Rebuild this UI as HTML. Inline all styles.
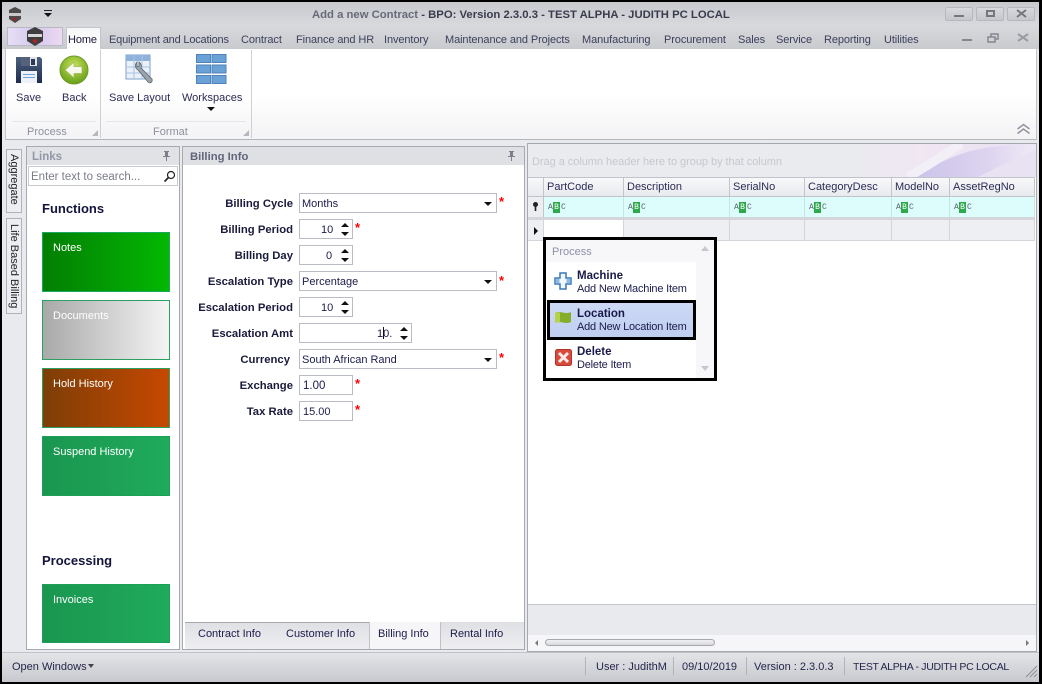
<!DOCTYPE html>
<html><head><meta charset="utf-8">
<style>
html,body{margin:0;padding:0}
body{width:1042px;height:684px;position:relative;overflow:hidden;background:#000;font-family:"Liberation Sans",sans-serif;font-size:11px;color:#1b1b4b}
div,span,svg{position:absolute;box-sizing:border-box}
.t{white-space:nowrap;line-height:14px}
.tab{top:33px;color:#3b3f5c;white-space:nowrap;line-height:14px;letter-spacing:-.1px}
.lab{right:749px;font-weight:bold;font-size:11.3px;color:#1a1a3c;white-space:nowrap;line-height:14px}
.inp{background:#fff;border:1px solid #b9bcc4}
.val{white-space:nowrap;line-height:14px;color:#1b1b4b;font-size:11px}
.star{color:#f00;font-weight:bold;font-size:13px;line-height:14px}
.up{width:0;height:0;border-left:4px solid transparent;border-right:4px solid transparent;border-bottom:4px solid #111}
.dn{width:0;height:0;border-left:4px solid transparent;border-right:4px solid transparent;border-top:4px solid #111}
.tile{left:42px;width:128px;height:60px;color:#fff;padding:8px 10px;line-height:14px;font-size:11px;border:1px solid #2aa163}
.hd{top:177px;height:20px;background:linear-gradient(#f8f8fa,#e9eaee);border-right:1px solid #c2c4cb;border-top:1px solid #c2c4cb;border-bottom:1px solid #c2c4cb;padding:2px 0 0 3px;white-space:nowrap;line-height:14px;color:#2b2b55}
.fl{top:197px;height:20px;border-right:1px solid #c6e6e6}
.abc{left:4px;top:5px;width:22px;height:11px;font-size:8px;line-height:11px;color:#55606a;font-family:"Liberation Mono",monospace}
.abc b{position:absolute;left:5px;top:0;width:7px;height:11px;background:#2da84a;color:#fff;font-weight:normal;text-align:center}
.abc i{position:absolute;font-style:normal;top:0}
.dc{top:220px;height:21px;background:#eeeff2;border-right:1px solid #d3d5da;border-bottom:1px solid #d3d5da}
.sep{top:657px;width:1px;height:18px;background:#b1b3ba}
.pop{letter-spacing:-.2px}
</style></head><body>

<!-- window -->
<div style="left:2px;top:2px;width:1037px;height:680px;background:#e9eaee"></div>
<!-- title bar -->
<div style="left:2px;top:2px;width:1037px;height:47px;background:linear-gradient(#c8c9ce,#d8d9dd 50%,#c9cace)"></div>
<svg style="left:6px;top:6px" width="18" height="18" viewBox="0 0 18 18"><path d="M9 1l6 3v9l-6 4-6-4V4z" fill="#4c4a4a"/><rect x="3" y="7" width="12" height="3" fill="#c9c9c9"/><circle cx="9" cy="13" r="1.500" fill="#a22"/></svg>
<div class="dn" style="left:44px;top:13px"></div><div style="left:44px;top:10px;width:8px;height:1px;background:#222"></div>
<div class="t" style="left:312px;top:8px;font-weight:bold;font-size:11.3px;color:#676a78">Add a new Contract <span style="position:static;color:#3a3c4c">- BPO: Version 2.3.0.3 - TEST ALPHA - JUDITH PC LOCAL</span></div>

<!-- window buttons -->
<div style="left:945px;top:7px;width:28px;height:14px;border:1px solid #b6b8be;border-radius:2px;background:linear-gradient(#d8d9dd,#c6c7cc)"></div><div style="left:954px;top:15px;width:10px;height:2px;background:#75767e"></div>
<div style="left:976px;top:7px;width:28px;height:14px;border:1px solid #b6b8be;border-radius:2px;background:linear-gradient(#d8d9dd,#c6c7cc)"></div><div style="left:986px;top:10px;width:9px;height:7px;border:2px solid #75767e"></div>
<div style="left:1007px;top:7px;width:28px;height:14px;border:1px solid #b6b8be;border-radius:2px;background:linear-gradient(#d8d9dd,#c6c7cc)"></div>
<svg style="left:1016px;top:9px" width="11" height="9" viewBox="0 0 11 9"><path d="M1 1l9 7M10 1l-9 7" stroke="#75767e" stroke-width="2"/></svg>
<svg style="left:962px;top:33px" width="70" height="11" viewBox="0 0 70 11"><rect x="0" y="6" width="10" height="2" fill="#85878f"/><rect x="29" y="1" width="7" height="5" fill="none" stroke="#85878f" stroke-width="1.500"/><rect x="26" y="4" width="7" height="5" fill="#d0d1d6" stroke="#85878f" stroke-width="1.500"/><path d="M56 1l10 7M66 1l-10 7" stroke="#9a9ca4" stroke-width="2"/></svg>

<!-- app button -->
<div style="left:7px;top:27px;width:56px;height:19px;background:linear-gradient(90deg,#e6dff5,#d6c9ee 50%,#ecd9f2);border:1px solid #b9b9c6"></div>
<svg style="left:25px;top:26px" width="20" height="21" viewBox="0 0 20 21"><path d="M10 1l8 4v10l-8 5-8-5V5z" fill="#3f3d3e"/><rect x="3" y="8" width="14" height="3" fill="#d6d6d6"/><circle cx="10" cy="15" r="2" fill="#a22"/></svg>

<!-- tabs -->
<div style="left:66px;top:27px;width:35px;height:23px;background:linear-gradient(#f6f6f8,#fff);border:1px solid #c3c5ca;border-bottom:none"></div>
<div class="tab" style="left:68px;color:#1b1b3c">Home</div>
<div class="tab" style="left:109px;letter-spacing:-.19px">Equipment and Locations</div>
<div class="tab" style="left:241px">Contract</div>
<div class="tab" style="left:296px">Finance and HR</div>
<div class="tab" style="left:384px">Inventory</div>
<div class="tab" style="left:445px">Maintenance and Projects</div>
<div class="tab" style="left:582px">Manufacturing</div>
<div class="tab" style="left:664px">Procurement</div>
<div class="tab" style="left:738px">Sales</div>
<div class="tab" style="left:776px">Service</div>
<div class="tab" style="left:824px">Reporting</div>
<div class="tab" style="left:884px">Utilities</div>

<!-- ribbon -->
<div style="left:5px;top:49px;width:1032px;height:91px;background:linear-gradient(#fff 50%,#f3f3f5);border-bottom:1px solid #b4b6bc;border-left:1px solid #c3c5ca;border-right:1px solid #c3c5ca"></div>
<div style="left:100px;top:50px;width:1px;height:88px;background:#cfd0d5"></div>
<div style="left:251px;top:50px;width:1px;height:88px;background:#cfd0d5"></div>
<div style="left:12px;top:121px;width:84px;height:1px;background:#e4e5e8"></div>
<div style="left:106px;top:121px;width:140px;height:1px;background:#e4e5e8"></div>

<!-- save icon -->
<svg style="left:15px;top:56px" width="28" height="28" viewBox="0 0 28 28"><defs><linearGradient id="sv" x1="0" y1="0" x2="0" y2="1"><stop offset="0" stop-color="#4d5f80"/><stop offset="1" stop-color="#1f2d4c"/></linearGradient></defs><path d="M1 1h24l2 2v24H1z" fill="url(#sv)"/><rect x="6" y="1" width="16" height="9" fill="#dfe3e8"/><rect x="6" y="1" width="9" height="9" fill="#55627c"/><rect x="16" y="3" width="4" height="6" fill="#2c3a56"/><rect x="6" y="15" width="16" height="12" fill="#eef2f8"/><rect x="8" y="18" width="12" height="1" fill="#6ea2d8"/><rect x="8" y="21" width="12" height="1" fill="#6ea2d8"/></svg>
<!-- back icon -->
<svg style="left:59px;top:55px" width="30" height="30" viewBox="0 0 30 30"><defs><radialGradient id="bk" cx=".5" cy=".35" r=".7"><stop offset="0" stop-color="#c8e25a"/><stop offset="1" stop-color="#5e9a12"/></radialGradient></defs><circle cx="15" cy="15" r="14" fill="url(#bk)" stroke="#6f9a2a"/><path d="M6 15l9-8v4.500h8v7h-8V23z" fill="#f7f9ee" stroke="#9ab54d" stroke-width=".7"/></svg>
<!-- save layout icon -->
<svg style="left:125px;top:54px" width="30" height="32" viewBox="0 0 30 32"><rect x="1" y="1" width="24" height="24" fill="#eaf1fa" stroke="#7fa0c8"/><rect x="1" y="1" width="24" height="6" fill="#8fb2dc"/><path d="M1 13h24M1 19h24M9 1v24M17 1v24" stroke="#a9c3e2" fill="none"/><path d="M12 8a5 5 0 0 0 1 8l10 12c2 2 5 0 4-3L16 14a5 5 0 0 0-2-6v4l-2 1z" fill="#9aa2ac" stroke="#5e6670" stroke-width=".8"/></svg>
<!-- workspaces icon -->
<svg style="left:196px;top:54px" width="31" height="30" viewBox="0 0 31 30"><g fill="#6aa2d8" stroke="#4e82b8"><rect x=".5" y=".5" width="14" height="8"/><rect x="16" y=".5" width="14" height="8"/><rect x=".5" y="11" width="14" height="8"/><rect x="16" y="11" width="14" height="8"/><rect x=".5" y="21.500" width="14" height="8"/><rect x="16" y="21.500" width="14" height="8"/></g></svg>

<div class="t" style="left:16px;top:91px;color:#2b2b55">Save</div>
<div class="t" style="left:62px;top:91px;color:#2b2b55">Back</div>
<div class="t" style="left:109px;top:91px;color:#2b2b55">Save Layout</div>
<div class="t" style="left:182px;top:91px;color:#2b2b55">Workspaces</div>
<div class="dn" style="left:207px;top:107px"></div>
<div class="t" style="left:27px;top:125px;color:#8d90a0">Process</div>
<div class="t" style="left:153px;top:125px;color:#8d90a0">Format</div>
<svg style="left:92px;top:130px" width="7" height="7"><path d="M6 0v6H0z" fill="#b5b7bd"/></svg>
<svg style="left:243px;top:130px" width="7" height="7"><path d="M6 0v6H0z" fill="#b5b7bd"/></svg>
<svg style="left:1016px;top:123px" width="15" height="12" viewBox="0 0 15 12"><path d="M1.500 6L7.500 1.500 13.500 6M1.500 10.500L7.500 6 13.500 10.500" fill="none" stroke="#8f929a" stroke-width="1.500"/></svg>

<!-- vertical tabs -->
<div style="left:6px;top:149px;width:16px;height:64px;background:#eceef1;border:1px solid #b0b2b9"></div>
<div style="left:6px;top:218px;width:16px;height:96px;background:#eceef1;border:1px solid #b0b2b9"></div>
<div class="t" style="left:7px;top:154px;writing-mode:vertical-rl;line-height:14px;color:#222">Aggregate</div>
<div class="t" style="left:7px;top:224px;writing-mode:vertical-rl;line-height:14px;color:#222">Life Based Billing</div>

<!-- links panel -->
<div style="left:26px;top:146px;width:154px;height:504px;background:#fff;border:1px solid #a7a9b1"></div>
<div style="left:27px;top:147px;width:152px;height:18px;background:#e1e2e6"></div>
<div class="t" style="left:32px;top:150px;font-weight:bold;color:#9396a6;font-size:11.5px">Links</div>
<svg style="left:162px;top:151px" width="9" height="10" viewBox="0 0 9 10"><path d="M2 0h5v1H6v4h2v1H5v4H4V6H1V5h2V1H2z" fill="#7d808a"/></svg>
<div style="left:28px;top:166px;width:150px;height:20px;background:#fff;border:1px solid #c7c9ce"></div>
<div class="t" style="left:31px;top:170px;color:#7a7d88;font-size:11.5px">Enter text to search...</div>
<svg style="left:163px;top:170px" width="13" height="13" viewBox="0 0 13 13"><circle cx="8" cy="5" r="3.500" fill="none" stroke="#222" stroke-width="1.200"/><path d="M5.500 7.500L1.500 11.500" stroke="#222" stroke-width="1.600"/></svg>
<div class="t" style="left:42px;top:202px;font-weight:bold;font-size:13px;color:#14143c">Functions</div>
<div class="tile" style="top:232px;background:linear-gradient(90deg,#037e03,#03b803);border-color:#1ca860">Notes</div>
<div class="tile" style="top:300px;background:linear-gradient(90deg,#a9a9a9,#f4f4f4)">Documents</div>
<div class="tile" style="top:368px;background:linear-gradient(90deg,#7d3e07,#c64800)">Hold History</div>
<div class="tile" style="top:436px;background:linear-gradient(90deg,#1a9650,#1fab5c);border-color:#1d9f56">Suspend History</div>
<div class="t" style="left:42px;top:554px;font-weight:bold;font-size:13px;color:#14143c">Processing</div>
<div class="tile" style="top:584px;height:59px;background:linear-gradient(90deg,#1a9650,#1fab5c);border-color:#1d9f56">Invoices</div>

<!-- billing panel -->
<div style="left:182px;top:146px;width:343px;height:504px;background:#fff;border:1px solid #a7a9b1"></div>
<div style="left:183px;top:147px;width:341px;height:18px;background:#dfe0e4"></div>
<div class="t" style="left:190px;top:150px;font-weight:bold;color:#62657a;font-size:11.3px">Billing Info</div>
<svg style="left:507px;top:151px" width="9" height="10" viewBox="0 0 9 10"><path d="M2 0h5v1H6v4h2v1H5v4H4V6H1V5h2V1H2z" fill="#7d808a"/></svg>

<div class="lab" style="top:197px">Billing Cycle</div>
<div class="lab" style="top:223px">Billing Period</div>
<div class="lab" style="top:249px">Billing Day</div>
<div class="lab" style="top:275px">Escalation Type</div>
<div class="lab" style="top:301px">Escalation Period</div>
<div class="lab" style="top:327px">Escalation Amt</div>
<div class="lab" style="top:353px;right:752px">Currency</div>
<div class="lab" style="top:379px">Exchange</div>
<div class="lab" style="top:405px">Tax Rate</div>

<div class="inp" style="left:299px;top:193px;width:198px;height:20px"></div>
<div class="val" style="left:302px;top:197px">Months</div>
<div class="dn" style="left:484px;top:202px"></div>
<div class="star" style="left:499px;top:195px">*</div>

<div class="inp" style="left:299px;top:219px;width:54px;height:20px"></div>
<div class="val" style="left:321px;top:223px">10</div>
<div class="up" style="left:341px;top:223px"></div><div class="dn" style="left:341px;top:232px"></div>
<div class="star" style="left:355px;top:221px">*</div>

<div class="inp" style="left:299px;top:245px;width:54px;height:20px"></div>
<div class="val" style="left:326px;top:249px">0</div>
<div class="up" style="left:341px;top:249px"></div><div class="dn" style="left:341px;top:258px"></div>

<div class="inp" style="left:299px;top:271px;width:198px;height:20px"></div>
<div class="val" style="left:302px;top:275px">Percentage</div>
<div class="dn" style="left:484px;top:280px"></div>
<div class="star" style="left:499px;top:274px">*</div>

<div class="inp" style="left:299px;top:297px;width:54px;height:20px"></div>
<div class="val" style="left:321px;top:301px">10</div>
<div class="up" style="left:341px;top:301px"></div><div class="dn" style="left:341px;top:310px"></div>

<div class="inp" style="left:299px;top:323px;width:113px;height:20px"></div>
<div class="val" style="left:377px;top:327px">10.</div>
<div style="left:383px;top:327px;width:1px;height:12px;background:#111"></div>
<div class="up" style="left:400px;top:327px"></div><div class="dn" style="left:400px;top:336px"></div>

<div class="inp" style="left:299px;top:349px;width:198px;height:20px"></div>
<div class="val" style="left:302px;top:353px">South African Rand</div>
<div class="dn" style="left:484px;top:358px"></div>
<div class="star" style="left:499px;top:351px">*</div>

<div class="inp" style="left:299px;top:375px;width:54px;height:20px"></div>
<div class="val" style="left:303px;top:379px;font-size:11.5px">1.00</div>
<div class="star" style="left:355px;top:377px">*</div>

<div class="inp" style="left:299px;top:401px;width:54px;height:20px"></div>
<div class="val" style="left:303px;top:405px">15.00</div>
<div class="star" style="left:355px;top:403px">*</div>

<!-- bottom tabs -->
<div style="left:185px;top:622px;width:339px;height:27px;background:linear-gradient(#dfe0e4,#eeeef1)"></div>
<div style="left:185px;top:622px;width:184px;height:1px;background:#a7a9b1"></div>
<div style="left:369px;top:622px;width:72px;height:27px;background:#f6f6f8;border-left:1px solid #bfc1c7;border-right:1px solid #bfc1c7"></div>
<div class="t" style="left:198px;top:627px">Contract Info</div>
<div class="t" style="left:286px;top:627px">Customer Info</div>
<div class="t" style="left:378px;top:627px">Billing Info</div>
<div class="t" style="left:450px;top:627px">Rental Info</div>

<!-- grid -->
<div style="left:527px;top:143px;width:510px;height:509px;background:#fff;border:1px solid #a7a9b1"></div>
<div style="left:528px;top:144px;width:508px;height:33px;background:#eaebee"></div>
<svg style="left:850px;top:144px" width="186" height="33" viewBox="0 0 186 33"><defs><linearGradient id="sw" x1="0" y1="0" x2="1" y2="0"><stop offset="0" stop-color="#eaebee"/><stop offset=".45" stop-color="#f0e6f3"/><stop offset="1" stop-color="#e8e0f2"/></linearGradient><linearGradient id="sw2" x1="0" y1="0" x2="1" y2="0"><stop offset="0" stop-color="#cbc2ea"/><stop offset=".6" stop-color="#dcd4ef"/><stop offset="1" stop-color="#efeaf6"/></linearGradient></defs><rect width="186" height="33" fill="url(#sw)"/><path d="M63 33C85 20 110 8 135 4C160 0 186 0 186 0V33z" fill="url(#sw2)"/><path d="M58 33C85 18 100 6 112 0" fill="none" stroke="#f2f0f6" stroke-width="9"/><path d="M128 33C150 22 170 12 186 6V33z" fill="#e8e2f2"/></svg>
<div class="t" style="left:532px;top:155px;color:#c6c8ce;letter-spacing:-.04px">Drag a column header here to group by that column</div>

<div class="hd" style="left:528px;width:16px;border-right:1px solid #c2c4cb"></div>
<div class="hd" style="left:544px;width:80px">PartCode</div>
<div class="hd" style="left:624px;width:106px">Description</div>
<div class="hd" style="left:730px;width:75px">SerialNo</div>
<div class="hd" style="left:805px;width:87px">CategoryDesc</div>
<div class="hd" style="left:892px;width:58px">ModelNo</div>
<div class="hd" style="left:950px;width:85px">AssetRegNo</div>

<div style="left:528px;top:197px;width:16px;height:20px;background:#eceef1;border-right:1px solid #c2c4cb"></div>
<svg style="left:532px;top:202px" width="7" height="10" viewBox="0 0 7 10"><circle cx="3.500" cy="2.500" r="2.500" fill="#222"/><rect x="2.700" y="3" width="1.600" height="6" fill="#222"/></svg>
<div style="left:544px;top:197px;width:491px;height:20px;background:#dcfdfb"></div>
<div class="fl" style="left:544px;width:80px"><div class="abc"><i style="left:0">A</i><b>B</b><i style="left:13px">C</i></div></div>
<div class="fl" style="left:624px;width:106px"><div class="abc"><i style="left:0">A</i><b>B</b><i style="left:13px">C</i></div></div>
<div class="fl" style="left:730px;width:75px"><div class="abc"><i style="left:0">A</i><b>B</b><i style="left:13px">C</i></div></div>
<div class="fl" style="left:805px;width:87px"><div class="abc"><i style="left:0">A</i><b>B</b><i style="left:13px">C</i></div></div>
<div class="fl" style="left:892px;width:58px"><div class="abc"><i style="left:0">A</i><b>B</b><i style="left:13px">C</i></div></div>
<div class="fl" style="left:950px;width:85px"><div class="abc"><i style="left:0">A</i><b>B</b><i style="left:13px">C</i></div></div>
<div style="left:528px;top:217px;width:507px;height:3px;background:#d5d6db"></div>

<div class="dc" style="left:528px;width:16px"></div>
<div class="dc" style="left:544px;width:80px;background:#fff"></div>
<div class="dc" style="left:624px;width:106px"></div>
<div class="dc" style="left:730px;width:75px"></div>
<div class="dc" style="left:805px;width:87px"></div>
<div class="dc" style="left:892px;width:58px"></div>
<div class="dc" style="left:950px;width:85px"></div>
<div style="left:534px;top:227px;width:0;height:0;border-top:4px solid transparent;border-bottom:4px solid transparent;border-left:4px solid #111"></div>

<div style="left:528px;top:604px;width:508px;height:31px;background:#e9eaee;border-top:1px solid #c5c7cc"></div>
<div style="left:528px;top:635px;width:508px;height:16px;background:#f6f6f8"></div>
<div style="left:545px;top:639px;width:170px;height:7px;border:1px solid #a6a8af;border-radius:4px;background:linear-gradient(#f0f0f2,#d9dade)"></div>
<div style="left:535px;top:640px;width:0;height:0;border-top:3px solid transparent;border-bottom:3px solid transparent;border-right:3px solid #777"></div>
<div style="left:1026px;top:640px;width:0;height:0;border-top:3px solid transparent;border-bottom:3px solid transparent;border-left:3px solid #777"></div>

<!-- popup -->
<div style="left:543px;top:237px;width:174px;height:144px;background:#fff;border:3px solid #000"></div>
<div style="left:546px;top:240px;width:150px;height:22px;background:#f7f7f9"></div>
<div style="left:696px;top:240px;width:18px;height:138px;background:#f7f7f9"></div>
<div class="t" style="left:552px;top:245px;color:#8d90a6">Process</div>
<svg style="left:701px;top:246px" width="8" height="5"><path d="M4 0l4 5H0z" fill="#c6c8ce"/></svg>
<svg style="left:701px;top:366px" width="8" height="5"><path d="M4 5l4-5H0z" fill="#c6c8ce"/></svg>

<svg style="left:554px;top:272px" width="18" height="18" viewBox="0 0 18 18"><path d="M6 1h6v5h5v6h-5v5H6v-5H1V6h5z" fill="#f2f7fc" stroke="#3a78b8" stroke-width="1.500"/><rect x="1.500" y="6.500" width="4" height="5" fill="#8dbbe0"/><rect x="12.500" y="6.500" width="4" height="5" fill="#8dbbe0"/></svg>
<div class="t" style="left:577px;top:269px;font-weight:bold;font-size:11.500px;color:#1a1a4a">Machine</div>
<div class="t pop" style="left:577px;top:282px">Add New Machine Item</div>

<div style="left:547px;top:300px;width:149px;height:40px;background:linear-gradient(#cdd9f4,#bfcff1);border:3px solid #000"></div>
<svg style="left:554px;top:310px" width="18" height="16" viewBox="0 0 18 16"><path d="M1 3c5-3 10 2 16-1v10c-6 3-11-2-16 1z" fill="#86ad2b"/><path d="M1 3c2-1 4-1 5 0v10c-1-1-3-1-5 0z" fill="#b4d24a"/></svg>
<div class="t" style="left:577px;top:307px;font-weight:bold;font-size:11.500px;color:#1a1a4a">Location</div>
<div class="t pop" style="left:577px;top:320px">Add New Location Item</div>

<svg style="left:555px;top:349px" width="17" height="17" viewBox="0 0 17 17"><rect x=".5" y=".5" width="16" height="16" rx="2" fill="#d84a3c" stroke="#b23328"/><path d="M4 4l9 9M13 4l-9 9" stroke="#f7ecea" stroke-width="3"/></svg>
<div class="t" style="left:577px;top:345px;font-weight:bold;font-size:11.500px;color:#1a1a4a">Delete</div>
<div class="t pop" style="left:577px;top:358px">Delete Item</div>

<!-- status bar -->
<div style="left:2px;top:652px;width:1037px;height:30px;background:linear-gradient(#e3e4e8,#c8c9ce);border-top:1px solid #c0c2c8"></div>
<div class="t" style="left:12px;top:660px;color:#26264a">Open Windows</div>
<div class="dn" style="left:88px;top:664px;border-left-width:3px;border-right-width:3px;border-top-color:#444"></div>
<div class="sep" style="left:585px"></div>
<div class="t" style="left:596px;top:660px;color:#26264a">User : JudithM</div>
<div class="sep" style="left:673px"></div>
<div class="t" style="left:682px;top:660px;color:#26264a">09/10/2019</div>
<div class="sep" style="left:746px"></div>
<div class="t" style="left:754px;top:660px;color:#26264a">Version : 2.3.0.3</div>
<div class="sep" style="left:844px"></div>
<div class="t" style="left:853px;top:660px;color:#26264a;font-size:10.500px;letter-spacing:-.3px">TEST ALPHA - JUDITH PC LOCAL</div>
<svg style="left:1024px;top:664px" width="14" height="14" viewBox="0 0 14 14"><path d="M13 2L2 13M13 6L6 13M13 10l-3 3" stroke="#8d8f96" stroke-width="1"/></svg>

</body></html>
